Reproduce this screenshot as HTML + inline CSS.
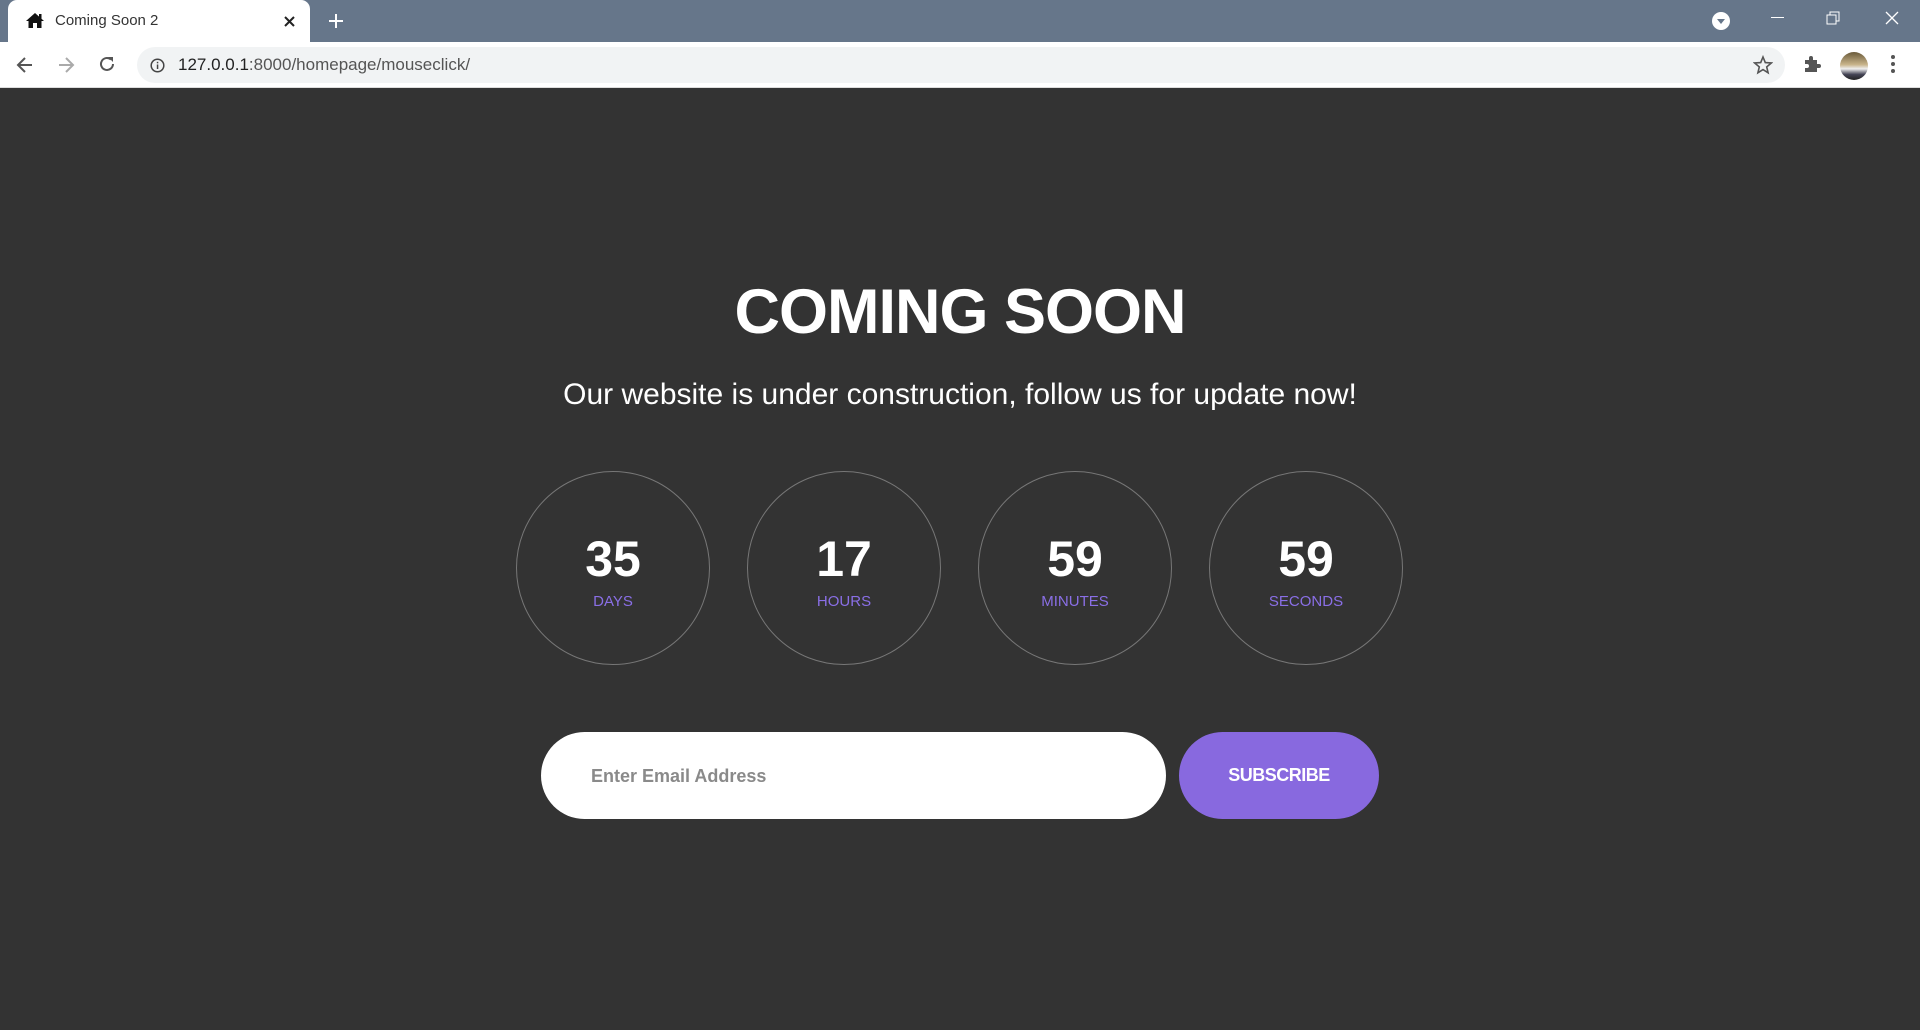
<!DOCTYPE html>
<html><head><meta charset="utf-8"><style>
*{margin:0;padding:0;box-sizing:border-box}
body{width:1920px;height:1030px;background:#333;font-family:"Liberation Sans",sans-serif;overflow:hidden;position:relative}
.tabbar{position:absolute;left:0;top:0;width:1920px;height:42px;background:#66768a}
.tab{position:absolute;left:8px;top:0;width:302px;height:42px;background:#fff;border-radius:9px 9px 0 0}
.toolbar{position:absolute;left:0;top:42px;width:1920px;height:46px;background:#fff;border-bottom:1px solid #ddd}
.omni{position:absolute;left:137px;top:5px;width:1648px;height:36px;background:#f1f3f4;border-radius:18px}
.abs{position:absolute}
.circle{position:absolute;width:194px;height:194px;border:1px solid #777;border-radius:50%;top:471px;text-align:center}
.circle .n{position:absolute;left:0;right:0;top:62px;font-size:50px;font-weight:bold;color:#fff;line-height:1}
.circle .l{position:absolute;left:0;right:0;top:122px;font-size:15px;color:#8a6fe6;line-height:1}
</style></head><body>
<div class="tabbar">
 <div class="tab">
  <svg class="abs" style="left:17px;top:12px" width="20" height="17" viewBox="0 0 20 17"><path d="M10 1 L1 9 H3.5 V16 H8 V11 H12 V16 H16.5 V9 H19 Z" fill="#111"/><rect x="14" y="2" width="2.5" height="5" fill="#111"/></svg>
  <div class="abs" style="left:47px;top:12px;font-size:15px;color:#333">Coming Soon 2</div>
  <svg class="abs" style="left:276px;top:16px" width="11" height="11"><path d="M1 1L10 10M10 1L1 10" stroke="#222" stroke-width="2"/></svg>
 </div>
 <svg class="abs" style="left:328px;top:13px" width="16" height="16"><path d="M8 1V15M1 8H15" stroke="#fff" stroke-width="2"/></svg>
 <svg class="abs" style="left:1712px;top:12px" width="18" height="18"><circle cx="9" cy="9" r="9" fill="#fff"/><path d="M5 7H13L9 12Z" fill="#66768a"/></svg>
 <div class="abs" style="left:1771px;top:17px;width:13px;height:1px;background:#fff"></div>
 <svg class="abs" style="left:1826px;top:11px" width="14" height="14"><rect x="1" y="4" width="9" height="9" fill="none" stroke="#fff"/><path d="M4 4V1H13V10H10" fill="none" stroke="#fff"/></svg>
 <svg class="abs" style="left:1885px;top:11px" width="14" height="14"><path d="M1 1L13 13M13 1L1 13" stroke="#fff" stroke-width="1.3"/></svg>
</div>
<div class="toolbar">
 <svg class="abs" style="left:16px;top:14px" width="18" height="18"><path d="M16 9H3M9 2L2 9L9 16" fill="none" stroke="#555" stroke-width="2"/></svg>
 <svg class="abs" style="left:57px;top:14px" width="18" height="18"><path d="M2 9H15M9 2L16 9L9 16" fill="none" stroke="#aaa" stroke-width="2"/></svg>
 <svg class="abs" style="left:98px;top:13px" width="18" height="18"><path d="M15 9A6 6 0 1 1 13 4.5" fill="none" stroke="#555" stroke-width="2"/><path d="M10 2H15V7Z" fill="#555"/></svg>
 <div class="omni">
  <svg class="abs" style="left:13px;top:11px" width="15" height="15"><circle cx="7.5" cy="7.5" r="6.3" fill="none" stroke="#444" stroke-width="1.5"/><rect x="6.8" y="6.5" width="1.5" height="4.5" fill="#444"/><rect x="6.8" y="3.8" width="1.5" height="1.5" fill="#444"/></svg>
  <div class="abs" style="left:41px;top:8px;font-size:17px;color:#222">127.0.0.1<span style="color:#555">:8000/homepage/mouseclick/</span></div>
  <svg class="abs" style="left:1616px;top:8px" width="20" height="20" viewBox="0 0 20 20"><path d="M10 2L12.3 7.6L18.3 8L13.7 11.9L15.1 17.8L10 14.6L4.9 17.8L6.3 11.9L1.7 8L7.7 7.6Z" fill="none" stroke="#555" stroke-width="1.6"/></svg>
 </div>
 <svg class="abs" style="left:1802px;top:12px" width="20" height="20" viewBox="0 0 20 20"><path d="M3 6H7V4A2 2 0 0 1 11 4V6H15V10H17A2 2 0 0 1 17 14H15V18H3V14H5A2 2 0 0 0 5 10H3Z" fill="#555"/></svg>
 <div class="abs" style="left:1840px;top:10px;width:28px;height:28px;border-radius:50%;background:linear-gradient(#6a5a3a,#c8b48a 45%,#eee 60%,#445 80%,#222)"></div>
 <div class="abs" style="left:1891px;top:13px;width:4px;height:4px;border-radius:2px;background:#555;box-shadow:0 7px 0 #555,0 14px 0 #555"></div>
</div>

<div class="abs" style="left:0;right:0;top:272px;text-align:center;font-size:63px;font-weight:bold;color:#fff;letter-spacing:-1px;line-height:80px">COMING SOON</div>
<div class="abs" style="left:0;right:0;top:375px;text-align:center;font-size:30px;color:#fff;line-height:40px">Our website is under construction, follow us for update now!</div>

<div class="circle" style="left:516px"><div class="n">35</div><div class="l">DAYS</div></div>
<div class="circle" style="left:747px"><div class="n">17</div><div class="l">HOURS</div></div>
<div class="circle" style="left:978px"><div class="n">59</div><div class="l">MINUTES</div></div>
<div class="circle" style="left:1209px"><div class="n">59</div><div class="l">SECONDS</div></div>

<div class="abs" style="left:541px;top:732px;width:625px;height:87px;background:#fff;border-radius:44px"><div class="abs" style="left:50px;top:34px;font-size:18px;font-weight:bold;color:#8a8a8a">Enter Email Address</div></div>
<div class="abs" style="left:1179px;top:732px;width:200px;height:87px;background:#8869df;border-radius:44px;text-align:center;line-height:87px;font-size:18px;font-weight:bold;color:#fff;letter-spacing:-0.5px">SUBSCRIBE</div>
</body></html>
